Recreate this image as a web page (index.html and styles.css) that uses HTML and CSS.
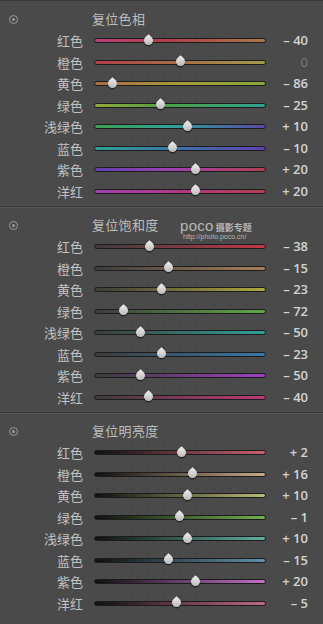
FILE: index.html
```html
<!DOCTYPE html>
<html lang="zh">
<head>
<meta charset="utf-8">
<link rel="stylesheet" href="styles.css">
</head>
<body>
<div class="panel">
  <section class="section">
    <div class="head"><span class="reset-icon"></span><span class="title">复位色相</span></div>
    <div class="row"><span class="label">红色</span><div class="track h-red"><span class="thumb" style="left:31.4%"></span></div><span class="value">– 40</span></div>
    <div class="row"><span class="label">橙色</span><div class="track h-orange"><span class="thumb" style="left:50%"></span></div><span class="value zero">0</span></div>
    <div class="row"><span class="label">黄色</span><div class="track h-yellow"><span class="thumb" style="left:10%"></span></div><span class="value">– 86</span></div>
    <div class="row"><span class="label">绿色</span><div class="track h-green"><span class="thumb" style="left:38.4%"></span></div><span class="value">– 25</span></div>
    <div class="row"><span class="label">浅绿色</span><div class="track h-aqua"><span class="thumb" style="left:54.65%"></span></div><span class="value">+ 10</span></div>
    <div class="row"><span class="label">蓝色</span><div class="track h-blue"><span class="thumb" style="left:45.35%"></span></div><span class="value">– 10</span></div>
    <div class="row"><span class="label">紫色</span><div class="track h-purple"><span class="thumb" style="left:59.3%"></span></div><span class="value">+ 20</span></div>
    <div class="row"><span class="label">洋红</span><div class="track h-magenta"><span class="thumb" style="left:59.3%"></span></div><span class="value">+ 20</span></div>
  </section>
  <section class="section">
    <div class="head"><span class="reset-icon"></span><span class="title">复位饱和度</span></div>
    <div class="watermark"><span class="wm-top"><span class="wm-poco">poco</span><span class="wm-cn">摄影专题</span></span><span class="wm-url">http://photo.poco.cn/</span></div>
    <div class="row"><span class="label">红色</span><div class="track s-red"><span class="thumb" style="left:32.33%"></span></div><span class="value">– 38</span></div>
    <div class="row"><span class="label">橙色</span><div class="track s-orange"><span class="thumb" style="left:43.02%"></span></div><span class="value">– 15</span></div>
    <div class="row"><span class="label">黄色</span><div class="track s-yellow"><span class="thumb" style="left:39.3%"></span></div><span class="value">– 23</span></div>
    <div class="row"><span class="label">绿色</span><div class="track s-green"><span class="thumb" style="left:16.51%"></span></div><span class="value">– 72</span></div>
    <div class="row"><span class="label">浅绿色</span><div class="track s-aqua"><span class="thumb" style="left:26.74%"></span></div><span class="value">– 50</span></div>
    <div class="row"><span class="label">蓝色</span><div class="track s-blue"><span class="thumb" style="left:39.3%"></span></div><span class="value">– 23</span></div>
    <div class="row"><span class="label">紫色</span><div class="track s-purple"><span class="thumb" style="left:26.74%"></span></div><span class="value">– 50</span></div>
    <div class="row"><span class="label">洋红</span><div class="track s-magenta"><span class="thumb" style="left:31.4%"></span></div><span class="value">– 40</span></div>
  </section>
  <section class="section last">
    <div class="head"><span class="reset-icon"></span><span class="title">复位明亮度</span></div>
    <div class="row"><span class="label">红色</span><div class="track l-red"><span class="thumb" style="left:50.93%"></span></div><span class="value">+ 2</span></div>
    <div class="row"><span class="label">橙色</span><div class="track l-orange"><span class="thumb" style="left:57.44%"></span></div><span class="value">+ 16</span></div>
    <div class="row"><span class="label">黄色</span><div class="track l-yellow"><span class="thumb" style="left:54.65%"></span></div><span class="value">+ 10</span></div>
    <div class="row"><span class="label">绿色</span><div class="track l-green"><span class="thumb" style="left:49.53%"></span></div><span class="value">– 1</span></div>
    <div class="row"><span class="label">浅绿色</span><div class="track l-aqua"><span class="thumb" style="left:54.65%"></span></div><span class="value">+ 10</span></div>
    <div class="row"><span class="label">蓝色</span><div class="track l-blue"><span class="thumb" style="left:43.02%"></span></div><span class="value">– 15</span></div>
    <div class="row"><span class="label">紫色</span><div class="track l-purple"><span class="thumb" style="left:59.3%"></span></div><span class="value">+ 20</span></div>
    <div class="row"><span class="label">洋红</span><div class="track l-magenta"><span class="thumb" style="left:47.67%"></span></div><span class="value">– 5</span></div>
  </section>
</div>
</body>
</html>
```
FILE: styles.css
```css
html, body {
  margin: 0;
  padding: 0;
  background: #4a4a4a;
}
.panel {
  width: 323px;
  height: 624px;
  overflow: hidden;
  background: #4a4a4a;
  border-top: 1px solid #3a3a3a;
  box-sizing: border-box;
  font-family: "Noto Sans CJK SC", "Noto Sans", sans-serif;
}
.section {
  position: relative;
  padding: 5px 0 4px;
  border-bottom: 1px solid #383838;
  box-shadow: 0 1px 0 #565656;
}
.section.last {
  border-bottom: none;
  box-shadow: none;
}
.head {
  display: flex;
  align-items: center;
  height: 24px;
}
.reset-icon {
  position: relative;
  width: 7px;
  height: 7px;
  margin-left: 9px;
  margin-top: 3px;
  border: 1.5px solid #9a9a9a;
  border-radius: 50%;
}
.reset-icon::after {
  content: "";
  position: absolute;
  left: 2px;
  top: 2px;
  width: 3px;
  height: 3px;
  border-radius: 50%;
  background: #9a9a9a;
}
.title {
  margin-left: 74px;
  font-size: 13px;
  color: #bdbdbd;
  letter-spacing: 0.3px;
}
.row {
  display: flex;
  align-items: center;
  height: 21.5px;
}
.label {
  width: 83px;
  text-align: right;
  font-size: 13px;
  color: #c2c2c2;
  line-height: 1;
}
.track {
  position: relative;
  margin-left: 11px;
  width: 170px;
  height: 3px;
  border: 1px solid #1c1c1c;
  border-radius: 3px;
  box-sizing: content-box;
}
.track::before {
  content: "";
  position: absolute;
  left: 3px;
  right: 3px;
  top: -6px;
  height: 2px;
  background: repeating-linear-gradient(90deg, #3c3c3c 0 1px, transparent 1px 16.4px);
}
.thumb {
  position: absolute;
  top: -3.5px;
  width: 9px;
  height: 9px;
  margin-left: -4.5px;
  transform: rotate(45deg);
  border-radius: 0 50% 50% 50%;
  background: linear-gradient(135deg, #f2f2f2, #b0b0b0);
  box-shadow: 1px 1px 1px rgba(0,0,0,0.55);
}
.value {
  width: 42px;
  text-align: right;
  font-family: "Open Sans", "Liberation Sans", sans-serif;
  font-weight: 600;
  font-size: 13px;
  color: #d4d4d4;
  line-height: 1;
}
.value.zero {
  color: #7a7a7a;
  font-weight: 400;
}

/* hue */
.h-red { background: linear-gradient(90deg, #b8407a, #b04048 45%, #a8784a); }
.h-orange { background: linear-gradient(90deg, #b04048, #a86a48 45%, #a09a4c); }
.h-yellow { background: linear-gradient(90deg, #a86a40, #a8983c 45%, #88a83c); }
.h-green { background: linear-gradient(90deg, #90a83c, #4aa048 45%, #30a090); }
.h-aqua { background: linear-gradient(90deg, #40a050, #30a098 45%, #5848a8); }
.h-blue { background: linear-gradient(90deg, #30a090, #3878a8 45%, #6040b0); }
.h-purple { background: linear-gradient(90deg, #6040b0, #a040b0 45%, #b04050); }
.h-magenta { background: linear-gradient(90deg, #a040b0, #b03888 45%, #b04050); }

/* saturation */
.s-red { background: linear-gradient(90deg, #3c3c3c, #c03848); }
.s-orange { background: linear-gradient(90deg, #3c3c3c, #a8805a); }
.s-yellow { background: linear-gradient(90deg, #3c3c3c, #b0a840); }
.s-green { background: linear-gradient(90deg, #3c3c3c, #60a848); }
.s-aqua { background: linear-gradient(90deg, #3c3c3c, #30a098); }
.s-blue { background: linear-gradient(90deg, #3c3c3c, #3878a8); }
.s-purple { background: linear-gradient(90deg, #3c3c3c, #a040c0); }
.s-magenta { background: linear-gradient(90deg, #3c3c3c, #c03878); }

/* luminance */
.l-red { background: linear-gradient(90deg, #101010, #c86070); }
.l-orange { background: linear-gradient(90deg, #101010, #c8a888); }
.l-yellow { background: linear-gradient(90deg, #101010, #b8b878); }
.l-green { background: linear-gradient(90deg, #101010, #70b050); }
.l-aqua { background: linear-gradient(90deg, #101010, #60b0a0); }
.l-blue { background: linear-gradient(90deg, #101010, #6090a8); }
.l-purple { background: linear-gradient(90deg, #101010, #c070c8); }
.l-magenta { background: linear-gradient(90deg, #101010, #c06888); }

.watermark {
  position: absolute;
  left: 180px;
  top: 11px;
  display: flex;
  flex-direction: column;
  color: #b8b8b8;
  line-height: 1;
}
.wm-top {
  display: flex;
  align-items: baseline;
  gap: 2px;
}
.wm-poco {
  font-family: "Liberation Sans", sans-serif;
  font-size: 15px;
  letter-spacing: 0.3px;
}
.wm-cn {
  font-size: 9px;
  font-weight: 700;
}
.wm-url {
  margin-left: 3px;
  margin-top: 0;
  font-family: "Liberation Sans", sans-serif;
  font-size: 7px;
}
```
